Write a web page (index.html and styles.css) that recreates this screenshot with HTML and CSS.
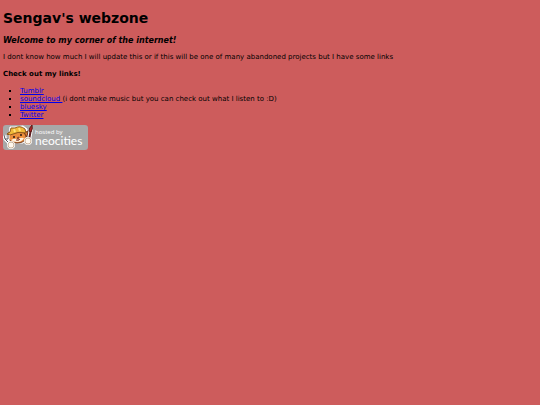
FILE: index.html
```html
<!DOCTYPE html>
<html lang="en">
<head>
    <meta charset="UTF-8">
    <meta name="viewport" content="width=device-width, initial-scale=1.0">
    <title>Sengav's webzone</title>
    <link rel="stylesheet" href="styles.css">
</head>
<body>
    <h1>Sengav's webzone</h1>
    <h2>Welcome to my corner of the internet!</h2>
    <p>I dont know how much I will update this or if this will be one of many abandoned projects but I have some links</p>

    <h3>Check out my links!</h3>
    <ul class="links">
        <li><a href="#tumblr">Tumblr</a></li>
        <li><a href="#soundcloud">soundcloud </a>(i dont make music but you can check out what I listen to :D)</li>
        <li><a href="#bluesky">bluesky</a></li>
        <li><a href="#twitter">Twitter</a></li>
    </ul>

    <!-- Neocities badge -->
    <a class="badge" href="#neocities">
        <svg class="cat" viewBox="0 0 30 25" aria-hidden="true">
            <!-- white sticker edge -->
            <path d="M6 10 L7 2 L12 2 L20 1 L24 4 L24 12 L20 18 L11 18 L6 15 Z" fill="#fff" stroke="#fff" stroke-linejoin="round"/>
            <!-- head -->
            <path d="M5 8 L5 13 Q8 18 14 18 Q21 18 23 13 L23 7 Z" fill="#ec8f3c" stroke="#6b3518"/>
            <path d="M8 15 Q11 13 15 14 Q18 12 21 13 Q19 17 14 17 Q10 17 8 15 Z" fill="#fff0dc"/>
            <path d="M21 8 L25 6 L24 12 Z" fill="#e07a34" stroke="#6b3518"/>
            <!-- hard hat -->
            <path d="M7 7 L8 3 L12 3 Q17 0 22 4 L23 8 Q15 6 7 10 L4 9 Z" fill="#f0b93a" stroke="#8f5a1c"/>
            <path d="M11 4 L12 7 M16 3 L17 6" stroke="#ffe27a" stroke-width="2"/>
            <!-- face -->
            <ellipse cx="11" cy="12" rx="1" ry="1" fill="#241510"/>
            <ellipse cx="18" cy="10" rx="1" ry="1" fill="#241510"/>
            <path d="M14 13 L16 12 L15 14 Z M13 15 Q16 16 17 14" fill="#8b2518" stroke="#8b4a30"/>
            <!-- wrench and brush -->
            <path d="M1 10 L2 14 L8 20 M5 10 L5 14 L2 14" fill="none" stroke="#fff" stroke-width="3"/>
            <path d="M1 10 L2 14 L8 20 M5 10 L5 14 L2 14" fill="none" stroke="#56595e"/>
            <path d="M28 4 L26 15" stroke="#fff" stroke-width="4"/>
            <path d="M28 4 L26 15" stroke="#5d1f22" stroke-width="2"/>
            <path d="M26 6 Q26 3 29 0 Q30 4 28 7 Z" fill="#b3262a" stroke="#5d1b16"/>
            <!-- paws -->
            <circle cx="8" cy="20" r="4" fill="#fff"/>
            <circle cx="8" cy="20" r="3" fill="#fff8ed" stroke="#c9b39a"/>
            <circle cx="25" cy="16" r="4" fill="#fff"/>
            <circle cx="25" cy="16" r="3" fill="#fff8ed" stroke="#c9b39a"/>
        </svg>
        <span class="badge-text">
            <span class="hosted">hosted by</span>
            <span class="name">neocities</span>
        </span>
    </a>
</body>
</html>
```

FILE: styles.css
```css
body {
    margin: 10px 3px;
    background-color: #cd5c5c;
    color: #000;
    font-family: Verdana, "DejaVu Sans", sans-serif;
    font-size: 7px;
    line-height: 8px;
}

h1 {
    margin: 0 0 10px;
    font-size: 14px;
    line-height: 16px;
}

h2 {
    margin: 0 0 7px;
    font-size: 8px;
    font-style: italic;
    line-height: 10px;
}

p {
    margin: 0 0 9px;
}

h3 {
    margin: 0 0 9px;
    font-size: 7px;
    line-height: 8px;
}

.links {
    margin: 0 0 6px;
    padding-left: 17px;
    list-style-type: square;
}

.links a {
    color: #0000ee;
}

/* Neocities badge */
.badge {
    display: flex;
    width: 85px;
    height: 25px;
    border-radius: 3px;
    background-color: #a8a8a8;
    color: #fff;
    text-decoration: none;
}

.cat {
    width: 30px;
    height: 25px;
}

.badge-text {
    display: flex;
    flex-direction: column;
    padding: 3px 0 0 2px;
    font-family: "Open Sans", "Noto Sans", sans-serif;
}

.hosted {
    font-size: 6px;
    line-height: 8px;
}

.name {
    font-family: Lato, sans-serif;
    font-size: 12px;
    line-height: 10px;
}
```
